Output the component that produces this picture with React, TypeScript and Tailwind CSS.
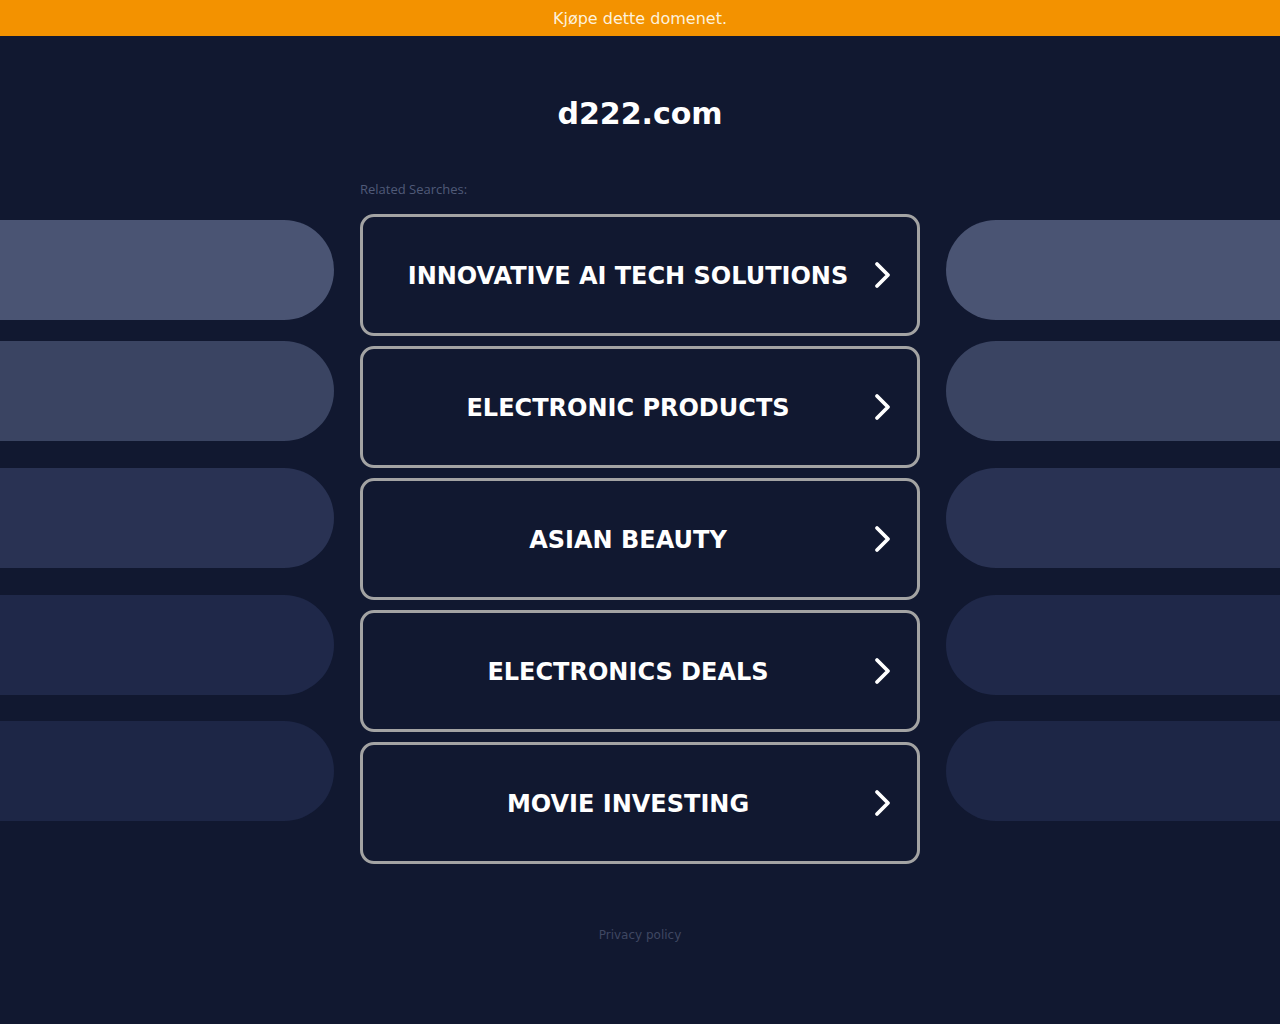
import React from "react";

const searches = [
    "INNOVATIVE AI TECH SOLUTIONS",
    "ELECTRONIC PRODUCTS",
    "ASIAN BEAUTY",
    "ELECTRONICS DEALS",
    "MOVIE INVESTING",
];

// background pills, top offset from previous + colour
const pills = [
    { mt: "mt-0", bg: "bg-[#4a5473]" },
    { mt: "mt-[21px]", bg: "bg-[#3a4462]" },
    { mt: "mt-[27px]", bg: "bg-[#293253]" },
    { mt: "mt-[27px]", bg: "bg-[#1f2849]" },
    { mt: "mt-[26px]", bg: "bg-[#1d2646]" },
];

const Chevron = () => (
    <svg width="20" height="30" viewBox="0 0 20 30" fill="none">
        <polyline
            points="4,4 15,15 4,26"
            stroke="white"
            strokeWidth="3.8"
            strokeLinecap="round"
            strokeLinejoin="round"
        />
    </svg>
);

const PillColumn: React.FC<{ side: "left" | "right" }> = ({ side }) => (
    <div className="w-[334px] shrink-0 pt-[39px] flex flex-col">
        {pills.map((p, i) => (
            <div
                key={i}
                className={`h-[100px] ${p.mt} ${p.bg} ${side === "left" ? "rounded-r-full" : "rounded-l-full"}`}
            />
        ))}
    </div>
);

export default function App() {
    return (
        <div className="min-h-screen w-full bg-[#111830] font-['DejaVu_Sans',sans-serif]">
            <div className="h-9 pt-[2px] bg-[#f39200] flex items-center justify-center">
                <span className="text-[16px] text-[#fdf1dc]">Kjøpe dette domenet.</span>
            </div>

            <h1 className="mt-[60px] text-center text-[30px] leading-9 font-bold text-white">d222.com</h1>

            <div className="mt-[49px] flex justify-between">
                <PillColumn side="left" />

                <div className="w-[560px] shrink-0">
                    <div className="text-[13px] leading-4 text-[#505a78] font-['Open_Sans',sans-serif] mb-[17px]">
                        Related Searches:
                    </div>
                    <div className="flex flex-col gap-[10px]">
                        {searches.map((s) => (
                            <a
                                key={s}
                                href="#"
                                className="h-[122px] border-[3px] border-[#a3a3a3] rounded-[14px] flex items-center pl-[20px] pr-[24px]"
                            >
                                <span className="flex-1 pt-[2px] text-center text-[24px] font-bold text-white">
                                    {s}
                                </span>
                                <Chevron />
                            </a>
                        ))}
                    </div>
                </div>

                <PillColumn side="right" />
            </div>

            <div className="mt-[58px] pb-[80px] text-center">
                <a href="#" className="text-[12px] leading-4 text-[#3f4762]">Privacy policy</a>
            </div>
        </div>
    );
}
